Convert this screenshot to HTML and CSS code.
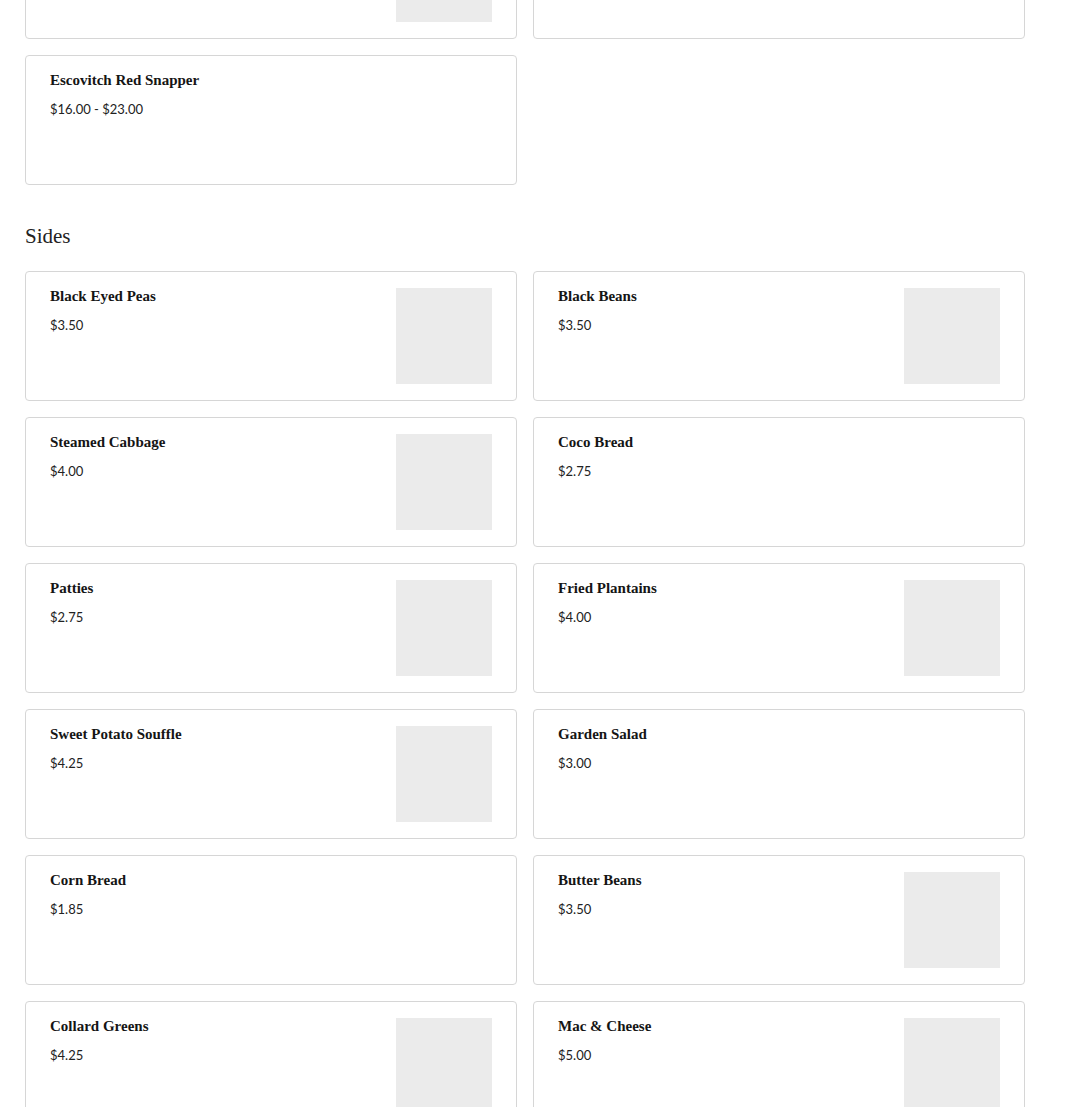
FILE: index.html
```html
<!DOCTYPE html>
<html>
<head>
<meta charset="utf-8">
<link rel="stylesheet" href="styles.css">
</head>
<body>
<main class="menu">
  <section class="section section-prev">
    <div class="grid">
      <div class="card"><div class="info"></div><div class="thumb"></div></div>
      <div class="card"><div class="info"></div></div>
      <div class="card"><div class="info"><div class="title">Escovitch Red Snapper</div><div class="price">$16.00 - $23.00</div></div></div>
    </div>
  </section>
  <section class="section">
    <h2 class="heading">Sides</h2>
    <div class="grid">
      <div class="card"><div class="info"><div class="title">Black Eyed Peas</div><div class="price">$3.50</div></div><div class="thumb"></div></div>
      <div class="card"><div class="info"><div class="title">Black Beans</div><div class="price">$3.50</div></div><div class="thumb"></div></div>
      <div class="card"><div class="info"><div class="title">Steamed Cabbage</div><div class="price">$4.00</div></div><div class="thumb"></div></div>
      <div class="card"><div class="info"><div class="title">Coco Bread</div><div class="price">$2.75</div></div></div>
      <div class="card"><div class="info"><div class="title">Patties</div><div class="price">$2.75</div></div><div class="thumb"></div></div>
      <div class="card"><div class="info"><div class="title">Fried Plantains</div><div class="price">$4.00</div></div><div class="thumb"></div></div>
      <div class="card"><div class="info"><div class="title">Sweet Potato Souffle</div><div class="price">$4.25</div></div><div class="thumb"></div></div>
      <div class="card"><div class="info"><div class="title">Garden Salad</div><div class="price">$3.00</div></div></div>
      <div class="card"><div class="info"><div class="title">Corn Bread</div><div class="price">$1.85</div></div></div>
      <div class="card"><div class="info"><div class="title">Butter Beans</div><div class="price">$3.50</div></div><div class="thumb"></div></div>
      <div class="card"><div class="info"><div class="title">Collard Greens</div><div class="price">$4.25</div></div><div class="thumb"></div></div>
      <div class="card"><div class="info"><div class="title">Mac &amp; Cheese</div><div class="price">$5.00</div></div><div class="thumb"></div></div>
    </div>
  </section>
</main>
</body>
</html>
```
FILE: styles.css
```css
html, body {
  margin: 0;
  padding: 0;
  background: #ffffff;
}
body {
  font-family: "Liberation Serif", "DejaVu Serif", serif;
  color: #1a1a1a;
  overflow: hidden;
}
.menu {
  width: 1000px;
  padding: 0 0 0 25px;
}
.section-prev {
  margin-top: -91px;
}
.heading {
  margin: 38px 0 22px 0;
  font-size: 21px;
  line-height: 26px;
  font-weight: normal;
  color: #222;
}
.grid {
  display: grid;
  grid-template-columns: 492px 492px;
  gap: 16px;
}
.card {
  box-sizing: border-box;
  height: 130px;
  border: 1px solid #d6d6d6;
  border-radius: 4px;
  padding: 16px 24px;
  display: flex;
  justify-content: space-between;
  background: #fff;
}
.info {
  display: flex;
  flex-direction: column;
  gap: 13px;
}
.title {
  font-weight: bold;
  font-size: 15px;
  line-height: 16px;
  color: #151515;
}
.price {
  font-family: "Lato", "Open Sans", sans-serif;
  font-size: 13px;
  line-height: 17px;
  color: #222;
}
.thumb {
  width: 96px;
  height: 96px;
  background: #ebebeb;
  flex: none;
}
```
